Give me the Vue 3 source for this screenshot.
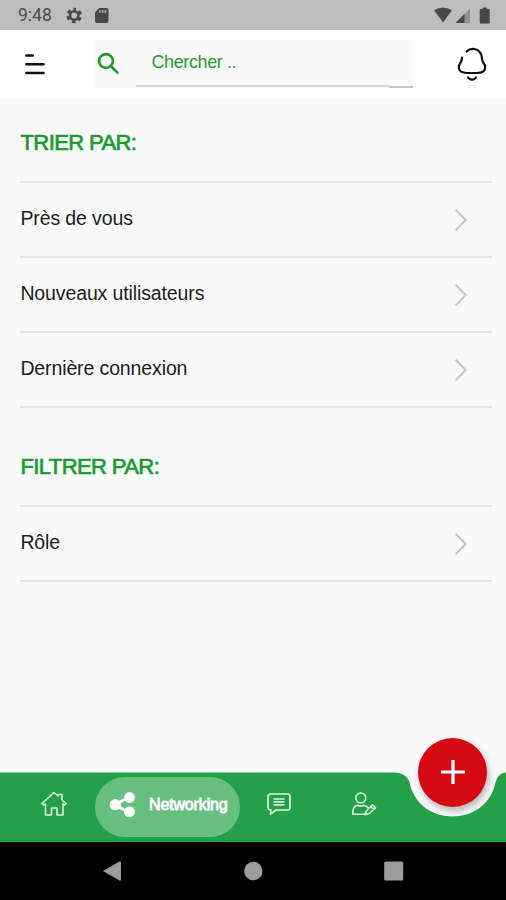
<template>
  <div class="screen">
    <div class="status-bar">
      <span class="clock">9:48</span>
      <svg class="status-icons" width="44" height="30" viewBox="0 0 44 30">
        <g fill="none" stroke="#484848" transform="rotate(-90 8.2 15.5)">
          <circle cx="8.2" cy="15.5" r="4.2" stroke-width="2.6" />
          <circle cx="8.2" cy="15.5" r="6.5" stroke-width="2.6" stroke-dasharray="3.6 3.207" stroke-dashoffset="1.8" />
        </g>
        <path fill="#484848" d="M33 8H40.500q2 0 2 2V21q0 2-2 2H31q-2 0-2-2V12.500Z" />
        <path stroke="#a8a8a8" stroke-width="1.600" d="M34 10v3M36.700 10v3M39.400 10v3" />
      </svg>
      <svg class="status-icons right" width="60" height="30" viewBox="0 0 60 30">
        <path fill="#484848" d="M1 10.300Q10 4.500 19 10.300L10 22.500Z" />
        <path fill="#929292" d="M37 8.500V23H22.500Z" />
        <path fill="#484848" d="M31.500 14V23H22.500Z" />
        <path fill="#484848" d="M47.700 9h2V7.500h4V9h2q1 0 1 1V22.500q0 1-1 1h-8q-1 0-1-1V10q0-1 1-1Z" />
      </svg>
    </div>

    <header class="top-bar">
      <svg class="menu" width="22" height="24" viewBox="0 0 22 24">
        <path d="M2.300 3.500h6.500M2.300 12.300h17.300M2.300 21h17.300" />
      </svg>
      <div class="search">
        <svg class="magnifier" width="24" height="26" viewBox="0 0 24 26">
          <circle cx="9" cy="9" r="6.900" />
          <path d="M13.800 14l7.300 7.400" />
        </svg>
        <div class="search-field">{{ placeholder }}</div>
        <div class="search-end"></div>
      </div>
      <svg class="bell" width="30" height="36" viewBox="0 0 30 36">
        <path d="M9.700 5.500C12 3 15 2.500 17.500 3C22 4 24.800 8 25 13C25.200 17 28.200 17.500 28.200 21C28.200 25.500 25 27 20 27H10C5 27 1.800 25.500 1.800 21C1.800 17.500 5 17 5 11.500" />
        <path d="M11 31.500q4 4.400 8 0" />
      </svg>
    </header>

    <main class="content">
      <section v-for="group of groups" :key="group.title" class="group">
        <h2>{{ group.title }}</h2>
        <ul>
          <li v-for="item of group.items" :key="item">
            <span>{{ item }}</span>
            <svg width="14" height="24" viewBox="0 0 14 24">
              <path d="M1.700 1.700L11.700 12L1.700 22.300" />
            </svg>
          </li>
        </ul>
      </section>
    </main>

    <nav class="tabs">
      <svg class="tabs-shape" width="506" height="70" viewBox="0 0 506 70">
        <path d="M0 .4H394Q406 .4 409.500 10C413 30 430 44.500 452.500 44.500S492 30 495.500 10Q498 1 506 .4V70H0Z" />
      </svg>
      <div class="tab home">
        <svg width="28" height="28" viewBox="0 0 28 28">
          <path d="M2 13.500L14 2.500L18 6V4.500h4V10L26 13.500L24.500 15L23 14V25H17V18H11.500V25H5.500V14L3.500 15Z" />
        </svg>
      </div>
      <div class="tab active">
        <svg width="28" height="28" viewBox="0 0 28 28">
          <path d="M21 6L7 14L21 21.500" stroke-width="3" />
          <g fill="#fff" stroke="none">
            <circle cx="7.300" cy="13.700" r="5.600" />
            <circle cx="21.500" cy="6.500" r="5.400" />
            <circle cx="21.500" cy="20.900" r="5.400" />
          </g>
        </svg>
        <span>Networking</span>
      </div>
      <div class="tab chat">
        <svg width="28" height="28" viewBox="0 0 28 28">
          <path stroke-width="1.700" d="M6 4H22.500Q25 4 25 6.500V17.500Q25 20 22.500 20H11L5.500 24L6 20Q3 20 3 17.500V6.500Q3 4 6 4Z" />
          <path stroke-width="1.700" d="M8.500 9H19.500M8.500 11.900H19.500M8.500 14.800H19.500" />
        </svg>
      </div>
      <div class="tab profile">
        <svg width="30" height="28" viewBox="0 0 30 28">
          <circle cx="10.800" cy="8" r="5" />
          <path d="M15 24.300H2.800Q2.300 16.500 7.500 15.300Q10.800 17 14 15.300Q17 15.800 18.500 18.500" />
          <path d="M15 24.800L16.300 21L22.500 14.800L25.500 17.700L19.300 23.500ZM20.800 16.500L23.800 19.300" />
        </svg>
      </div>
      <button class="fab" aria-label="Ajouter">
        <svg width="28" height="28" viewBox="0 0 28 28">
          <path d="M14 2V26M2 14H26" />
        </svg>
      </button>
    </nav>

    <footer class="system-nav">
      <svg width="20" height="22" viewBox="0 0 20 22">
        <path d="M1 11L17.500 1.500Q19 1 19 2.500V19.500Q19 21 17.500 20.500Z" />
      </svg>
      <svg width="20" height="20" viewBox="0 0 20 20">
        <circle cx="10.300" cy="10" r="9.200" />
      </svg>
      <svg width="20" height="20" viewBox="0 0 20 20">
        <rect x=".200" y=".500" width="19" height="19" rx="1.500" />
      </svg>
    </footer>
  </div>
</template>

<script setup>
  import { ref } from 'vue';

  const placeholder = ref("Chercher ..");

  const groups = [
    {
      title: "TRIER PAR:",
      items: ["Près de vous", "Nouveaux utilisateurs", "Dernière connexion"],
    },
    {
      title: "FILTRER PAR:",
      items: ["Rôle"],
    },
  ];
</script>

<style>
body {
  margin: 0;
}
</style>

<style scoped>
.screen {
  display: flex;
  flex-direction: column;
  width: 506px;
  height: 900px;
  overflow: hidden;
  background: #fafafa;
  font-family: "Liberation Sans", Arial, sans-serif;
}

svg {
  display: block;
  flex-shrink: 0;
}

.status-bar {
  display: flex;
  align-items: center;
  box-sizing: border-box;
  height: 30px;
  padding: 0 13px 0 18px;
  background: #bdbdbd;
}

.clock {
  width: 48px;
  color: #4c4c4c;
  font: 17.5px/33px Roboto, sans-serif;
}

.status-icons.right {
  margin-left: auto;
}

.top-bar {
  display: flex;
  align-items: flex-start;
  box-sizing: border-box;
  height: 69px;
  padding: 10px 19px 0 24px;
  background: #fff;
}

.menu {
  margin-top: 12px;
  fill: none;
  stroke: #111;
  stroke-width: 2.4;
  stroke-linecap: round;
}

.search {
  display: flex;
  width: 319px;
  height: 48px;
  margin-left: 48px;
  background: #fafafa;
}

.magnifier {
  margin: 12px 15px 0 3px;
  fill: none;
  stroke: #1c9a2c;
  stroke-width: 2.6;
}

.search-field {
  box-sizing: border-box;
  width: 253px;
  height: 47px;
  padding-left: 15.5px;
  border-bottom: 2px solid #d6d6d6;
  color: #279b37;
  font-size: 18px;
  line-height: 45px;
  letter-spacing: -0.4px;
}

.search-end {
  width: 24px;
  border-bottom: 2px solid #c8c8c8;
  box-sizing: border-box;
}

.bell {
  margin: 6px 0 0 auto;
  fill: none;
  stroke: #111;
  stroke-width: 2.2;
  stroke-linecap: round;
}

.content {
  flex: 1;
  padding: 0 14px 0 20px;
}

h2 {
  margin: 0;
  padding-top: 31px;
  height: 51px;
  color: #199c2d;
  font-size: 22px;
  font-weight: 400;
  line-height: 26px;
  letter-spacing: -0.6px;
  text-indent: 0.5px;
  -webkit-text-stroke: 0.7px #199c2d;
}

.group + .group h2 {
  padding-top: 46px;
}

ul {
  margin: 0;
  padding: 0;
  list-style: none;
  border-top: 2px solid #e4e4e5;
}

li {
  display: flex;
  align-items: center;
  justify-content: space-between;
  box-sizing: border-box;
  height: 75px;
  padding-right: 24px;
  border-bottom: 2px solid #e4e4e5;
  color: #1c1c1c;
  font-size: 19.5px;
  letter-spacing: -0.12px;
}

li span {
  padding: 0 0 3px 0.4px;
}

li svg {
  fill: none;
  stroke: #c3c7ca;
  stroke-width: 2;
}

.tabs {
  position: relative;
  display: flex;
  height: 70px;
}

.tabs-shape {
  position: absolute;
  inset: 0;
  fill: #24a148;
}

.tab {
  position: relative;
  display: flex;
  align-items: flex-start;
  padding-top: 18px;
}

.tab svg {
  fill: none;
  stroke: #d9f0df;
  stroke-width: 1.6;
  stroke-linejoin: round;
}

.home {
  margin-left: 40px;
}

.active {
  box-sizing: border-box;
  width: 145px;
  height: 60px;
  margin: 5px 0 0 27px;
  padding: 14px 0 0 13px;
  gap: 13px;
  border-radius: 30px;
  background: #68c080;
  color: #fff;
}

.tab.active svg {
  stroke: #fff;
}

.active span {
  font-size: 16px;
  line-height: 28px;
  letter-spacing: -0.15px;
  -webkit-text-stroke: 0.8px #fff;
}

.chat {
  margin-left: 25px;
}

.profile {
  margin-left: 57px;
}

.fab {
  position: absolute;
  top: -34px;
  left: 418px;
  display: flex;
  align-items: center;
  justify-content: center;
  width: 69px;
  height: 69px;
  padding: 0;
  border: none;
  border-radius: 50%;
  background: #d50911;
  box-shadow: 2px 4px 7px rgba(0, 0, 0, 0.28);
}

.fab svg {
  margin-bottom: 1px;
  stroke: #fff;
  stroke-width: 3.2;
}

.system-nav {
  display: flex;
  align-items: center;
  justify-content: space-between;
  box-sizing: border-box;
  height: 58px;
  padding: 0 102px;
  background: #000;
}

.system-nav svg {
  fill: #9c9c9c;
}
</style>
